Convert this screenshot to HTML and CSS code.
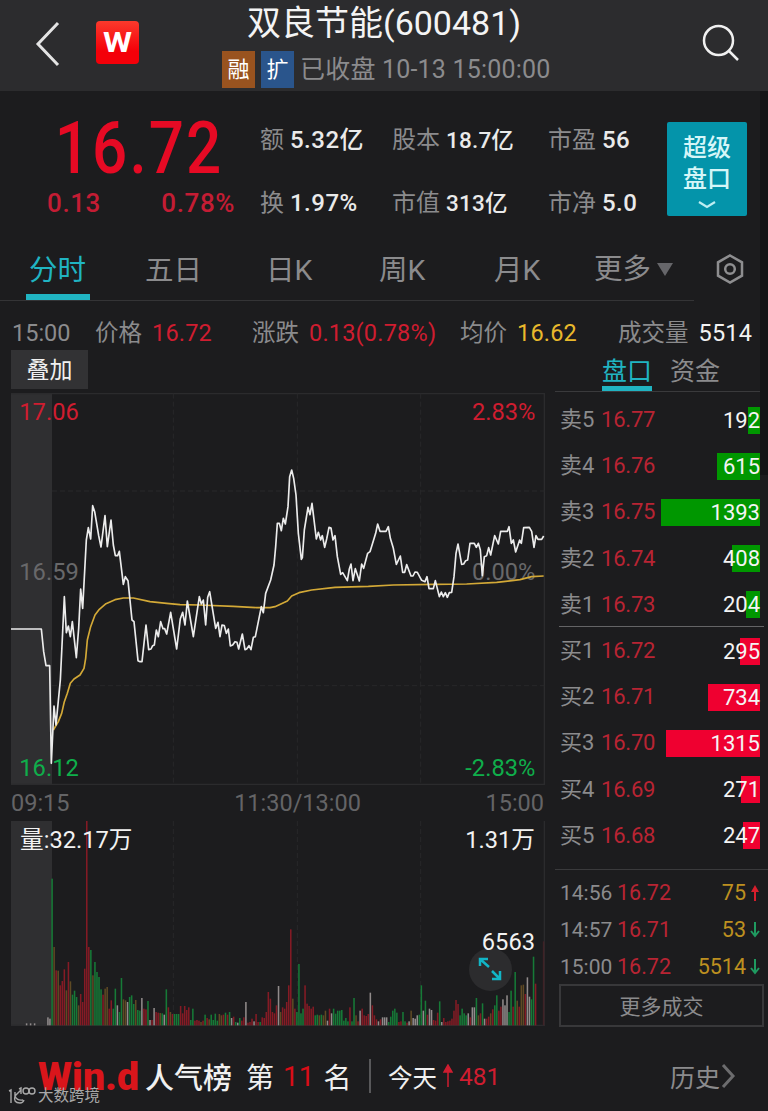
FILE: index.html
```html
<!DOCTYPE html>
<html lang="zh-CN">
<head>
    <meta charset="UTF-8">
    <meta name="viewport" content="width=device-width, initial-scale=1.0">
    <title>双良节能(600481)</title>
    <link rel="stylesheet" href="styles.css">
</head>
<body>
<header class="header">
    <svg class="back" width="26" height="46" viewBox="0 0 26 46"><path d="M23 2 L3 23 L23 44"/></svg>
    <div class="app-logo">
        <svg width="43" height="43" viewBox="0 0 43 43"><text x="21.5" y="31" text-anchor="middle" textLength="29" lengthAdjust="spacingAndGlyphs">W</text></svg>
    </div>
    <div class="title">
        <h1>双良节能(600481)</h1>
        <div class="status">
            <span class="badge badge-rong">融</span>
            <span class="badge badge-kuo">扩</span>
            <span class="closed">已收盘 10-13 15:00:00</span>
        </div>
    </div>
    <svg class="search" width="38" height="38" viewBox="0 0 38 38"><circle cx="16.500" cy="16.500" r="14.500"/><path d="M27 27 L36 36"/></svg>
</header>

<main>
    <section class="quote">
        <div class="price">
            <div class="last">16.72</div>
            <div class="change"><span>0.13</span><span>0.78%</span></div>
        </div>
        <div class="stats">
            <div>额 <b>5.32亿</b></div>
            <div>股本 <b class="small">18.7亿</b></div>
            <div>市盈 <b>56</b></div>
            <div>换 <b>1.97%</b></div>
            <div>市值 <b class="small">313亿</b></div>
            <div>市净 <b>5.0</b></div>
        </div>
        <div class="super">
            <span>超级</span>
            <span>盘口</span>
            <svg width="18" height="9" viewBox="0 0 18 9"><path d="M1 2 L9 7 L17 2"/></svg>
        </div>
    </section>

    <nav class="tabs">
        <span class="active">分时</span>
        <span>五日</span>
        <span>日K</span>
        <span>周K</span>
        <span>月K</span>
        <span class="more">更多<i></i></span>
        <svg width="28" height="30" viewBox="0 0 28 30"><path d="M14 1.500 L26 8.300 V21.700 L14 28.500 L2 21.700 V8.300 Z"/><circle cx="14" cy="15" r="4.800"/></svg>
    </nav>

    <section class="info">
        <div>15:00</div>
        <div>价格<span class="red">16.72</span></div>
        <div>涨跌<span class="red">0.13(0.78%)</span></div>
        <div>均价<span class="yellow">16.62</span></div>
        <div>成交量<span class="white">5514</span></div>
    </section>

    <section class="content">
        <div class="charts">
            <button class="overlay-btn">叠加</button>

            <svg class="chart" width="534" height="392" viewBox="33 9 1602 1176">
                <rect class="pre" x="33" y="9" width="123" height="1176"/>
                <path class="frame" d="M33 11 H1633 V1183 H33"/>
                <path class="grid" d="M156 303 H1633 M156 887 H1633 M520 11 V1183 M892 11 V1183 M1262 11 V1183"/>
                <g class="labels">
                    <text class="red" x="58" y="91">17.06</text>
                    <text class="red" x="1606" y="91" text-anchor="end">2.83%</text>
                    <text class="dim" x="58" y="571">16.59</text>
                    <text class="dim" x="1606" y="571" text-anchor="end">0.00%</text>
                    <text class="green" x="58" y="1158">16.12</text>
                    <text class="green" x="1606" y="1158" text-anchor="end">-2.83%</text>
                </g>
                <polyline class="avg" points="160,1020 175,995 185,970 193,935 202,910 211,880 222,867 240,855 252,835 257,805 262,750 272,710 285,675 298,658 318,641 345,629 370,624 400,624 450,635 500,640 540,644 600,645 700,649 770,653 810,653 825,650 862,633 875,618 897,608 935,600 1005,592 1105,589 1180,585 1300,583 1400,582 1490,577 1560,569 1595,560 1631,558"/>
                <polyline class="line" points="33,717 124,717 131,785 138,827 149,827 154,1120 162,948 168,1005 181,870 193,620 199,728 205,708 211,740 217,695 229,803 236,715 242,597 248,655 259,450 265,413 272,447 278,347 284,365 296,437 303,471 315,377 322,470 333,390 340,465 346,497 353,497 358,484 370,583 376,560 384,572 396,690 402,695 414,812 420,815 426,815 438,705 446,779 453,777 458,767 463,765 469,720 475,740 482,695 489,716 494,716 500,732 512,667 530,777 541,686 548,667 555,705 562,633 580,740 598,620 604,642 610,630 617,705 623,622 629,605 647,715 654,697 660,740 666,705 673,707 679,730 685,717 691,768 698,765 705,755 711,757 716,777 727,732 735,779 740,777 747,767 753,779 760,742 766,740 775,695 784,650 790,668 797,610 812,570 822,525 827,470 832,400 838,400 844,422 850,385 856,402 864,350 869,260 875,240 881,265 888,315 895,430 904,508 907,503 913,420 924,352 930,374 936,340 949,447 955,427 962,450 967,437 974,472 980,447 987,412 993,414 999,450 1005,437 1012,500 1022,553 1028,548 1042,572 1048,537 1053,522 1059,572 1066,536 1078,573 1085,522 1091,535 1103,490 1110,485 1127,430 1133,402 1140,424 1158,424 1165,410 1171,445 1180,475 1189,523 1201,498 1208,547 1214,547 1220,524 1233,558 1239,558 1245,546 1252,547 1265,571 1275,575 1281,560 1287,596 1300,596 1306,572 1318,620 1324,606 1330,620 1336,608 1342,622 1348,608 1355,607 1362,560 1368,490 1374,462 1385,523 1391,522 1397,512 1403,510 1410,460 1423,460 1429,472 1435,460 1441,480 1447,557 1453,500 1460,497 1466,473 1472,495 1484,437 1495,462 1502,424 1522,424 1527,410 1534,460 1540,450 1547,486 1559,450 1564,460 1571,413 1588,412 1595,424 1602,472 1608,437 1614,448 1625,448 1631,438"/>
            </svg>

            <div class="axis"><span>09:15</span><span class="noon">11:30/13:00</span><span>15:00</span></div>

            <div class="volume">
                <div class="expand">
                    <svg width="24" height="24" viewBox="0 0 24 24"><path d="M11 10 L2.500 2.500 M2 9 V2 H10 M14 14 L21.500 21.500 M22 14 V22 H14"/></svg>
                </div>
                <svg class="chart" width="534" height="205" viewBox="33 105 1602 615">
                    <rect class="pre" x="33" y="105" width="123" height="615"/>
                    <path class="frame" d="M33 718 H1633 V105"/>
                    <path class="grid" d="M520 105 V718 M892 105 V718 M1262 105 V718"/>
                    <g id="bars"></g>
                    <g class="labels white">
                        <text x="60" y="186">量:32.17万</text>
                        <text x="1605" y="186" text-anchor="end">1.31万</text>
                        <text x="1605" y="492" text-anchor="end">6563</text>
                    </g>
                </svg>
            </div>
        </div>

        <aside class="book">
            <div class="book-tabs"><span class="active">盘口</span><span>资金</span></div>

            <div class="orders sell">
                <div class="row"><span>卖5</span><em>16.77</em><b style="--w:12px">192</b></div>
                <div class="row"><span>卖4</span><em>16.76</em><b style="--w:43px">615</b></div>
                <div class="row"><span>卖3</span><em>16.75</em><b style="--w:99px">1393</b></div>
                <div class="row"><span>卖2</span><em>16.74</em><b style="--w:28px">408</b></div>
                <div class="row"><span>卖1</span><em>16.73</em><b style="--w:14px">204</b></div>
            </div>
            <div class="orders buy">
                <div class="row"><span>买1</span><em>16.72</em><b style="--w:20px">295</b></div>
                <div class="row"><span>买2</span><em>16.71</em><b style="--w:52px">734</b></div>
                <div class="row"><span>买3</span><em>16.70</em><b style="--w:94px">1315</b></div>
                <div class="row"><span>买4</span><em>16.69</em><b style="--w:19px">271</b></div>
                <div class="row"><span>买5</span><em>16.68</em><b style="--w:17px">247</b></div>
            </div>

            <div class="trades">
                <div class="trade"><span>14:56</span><em>16.72</em><b>75</b><svg class="up" width="10" height="18" viewBox="0 0 10 18"><path d="M5 17 V6"/><path class="head" d="M5 1 L9 8 H1 Z"/></svg></div>
                <div class="trade"><span>14:57</span><em>16.71</em><b>53</b><svg class="down" width="10" height="18" viewBox="0 0 10 18"><path d="M5 1 V15 M1 10 L5 15 L9 10"/></svg></div>
                <div class="trade"><span>15:00</span><em>16.72</em><b>5514</b><svg class="down" width="10" height="18" viewBox="0 0 10 18"><path d="M5 1 V15 M1 10 L5 15 L9 10"/></svg></div>
            </div>
            <button class="more-trades">更多成交</button>
        </aside>
    </section>
</main>

<footer class="footer">
    <svg class="wind" width="102" height="44" viewBox="0 0 102 44"><text x="0" y="36" textLength="101" lengthAdjust="spacingAndGlyphs">Win.d</text></svg>
    <span class="rank-name">人气榜</span>
    <span class="rank">第<b>11</b>名</span>
    <span class="today">今天<svg width="10" height="24" viewBox="0 0 10 24"><path d="M5 23 V5"/><path class="head" d="M5 1 L9 8 H1 Z"/></svg><b>481</b></span>
    <span class="history">历史<svg width="15" height="26" viewBox="0 0 15 26"><path d="M2 2 L12 13 L2 24"/></svg></span>
    <div class="watermark">
        <svg width="28" height="20" viewBox="0 0 28 20"><path d="M1 5 L3 4 V17 M13 4 L7 10 Q9 15 15 14 M7 6 V10 Q5 17 12 17 Q15 17 16 14 M11 3 L13 2 V8"/><circle cx="18" cy="5" r="3"/><circle cx="24" cy="5" r="3"/></svg>
        大数跨境
    </div>
</footer>

<script src="script.js"></script>
</body>
</html>
```

FILE: styles.css
```css
* {
    margin: 0;
    padding: 0;
    box-sizing: border-box;
}

body {
    width: 768px;
    height: 1111px;
    overflow: hidden;
    font-family: Roboto, "Noto Sans CJK SC", sans-serif;
    background-color: #1c1c1e;
    color: #8b8b8d;
}

svg {
    display: block;
    fill: none;
}

b, em {
    font-weight: normal;
    font-style: normal;
}

button {
    font-family: inherit;
    border: none;
}

.red { color: #cf1d30; fill: #cf1d30; }
.green { color: #0fae4b; fill: #0fae4b; }
.yellow { color: #e9b92c; }
.white { color: #f2f2f2; fill: #f2f2f2; }
.dim { fill: #68686a; }

/* header */
.header {
    height: 91px;
    background-color: #2c2c2e;
    display: flex;
    align-items: flex-start;
}

.back {
    margin: 21px 0 0 35px;
    stroke: #e4e4e4;
    stroke-width: 3;
}

.app-logo {
    margin: 21px 0 0 35px;
    width: 43px;
    height: 43px;
    border-radius: 4px;
    background: linear-gradient(#fb3a2c, #f40009 70%);
}

.app-logo text {
    font-size: 28px;
    font-weight: 700;
    fill: #fff;
}

.title {
    width: 330px;
    margin-left: 83px;
}

h1 {
    height: 49px;
    padding-left: 25px;
    font-size: 34px;
    font-weight: 400;
    line-height: 46px;
    color: #f4f4f4;
    white-space: nowrap;
}

.status {
    display: flex;
    align-items: center;
    gap: 6px;
    margin-top: 2px;
    height: 37px;
    font-size: 25px;
    white-space: nowrap;
}

.badge {
    width: 33px;
    height: 37px;
    line-height: 38px;
    font-size: 22px;
    text-align: center;
    color: #fff;
}

.badge-rong { background-color: #99531f; }
.badge-kuo { background-color: #2a558c; }

.closed {
    line-height: 41px;
    letter-spacing: 0.2px;
}

.search {
    margin: 24px 0 0 150px;
    stroke: #f0f0f0;
    stroke-width: 2.5;
}

/* quote */
main {
    background: linear-gradient(#141416, #141416) no-repeat right top / 8px 384px;
}

.quote {
    display: flex;
    height: 147px;
    padding-top: 17px;
}

.price {
    width: 260px;
    padding-left: 47px;
    color: #e60a24;
}

.last {
    width: 200px;
    height: 76px;
    padding-left: 9px;
    font-size: 72px;
    font-weight: 500;
    line-height: 82px;
    letter-spacing: 2.5px;
    transform: scaleX(0.86);
    transform-origin: left;
}

.change {
    display: flex;
    justify-content: space-between;
    width: 188px;
    padding-top: 1px;
    font-size: 26px;
    font-weight: 500;
    line-height: 37px;
    letter-spacing: 0.6px;
    color: #c41c34;
}

.stats {
    display: grid;
    grid-template-columns: 132px 156px 119px;
    grid-template-rows: 63px 63px;
    width: 407px;
    font-size: 24px;
    line-height: 65px;
    white-space: nowrap;
}

.stats b {
    font-weight: 500;
    letter-spacing: 0.5px;
    color: #eaeaea;
}

.stats .small {
    font-size: 22.5px;
    letter-spacing: 0.2px;
}

.super {
    display: flex;
    flex-direction: column;
    align-items: center;
    width: 80px;
    height: 94px;
    margin-top: 14px;
    padding-top: 11px;
    border-radius: 2px;
    background-color: #0494aa;
    font-size: 24px;
    font-weight: 500;
    line-height: 31px;
    color: #d5f6f8;
}

.super svg {
    margin-top: 5px;
    stroke: #bdeef2;
    stroke-width: 2.2;
}

/* period tabs */
.tabs {
    display: grid;
    grid-template-columns: 116px 121px 113px 115px 100px 121px 1fr;
    height: 63px;
    padding-left: 29px;
    font-size: 28.5px;
    line-height: 65px;
    background: linear-gradient(#343436, #343436) no-repeat left 62px / 694px 1px;
}

.tabs span {
    height: 63px;
}

.tabs .active {
    position: relative;
    color: #20b4c2;
}

.tabs .active::after {
    content: "";
    position: absolute;
    left: -3px;
    bottom: 1px;
    width: 64px;
    height: 6px;
    background-color: #20b4c2;
}

.tabs .more {
    display: flex;
    align-items: center;
    gap: 6px;
}

.more i {
    border: 8px solid transparent;
    border-top: 13px solid #66666a;
    border-bottom: none;
}

.tabs svg {
    margin: 16px 0 0 1px;
    stroke: #8e8e90;
    stroke-width: 2.5;
}

.info {
    display: grid;
    grid-template-columns: 83px 157px 208px 158px 1fr;
    height: 49px;
    padding-left: 12px;
    font-size: 23.5px;
    line-height: 64px;
    white-space: nowrap;
}

.info span {
    margin-left: 10px;
    letter-spacing: 0.2px;
}

/* charts */
.content {
    display: flex;
}

.charts {
    width: 555px;
    padding-left: 11px;
}

.overlay-btn {
    display: block;
    width: 77px;
    height: 39px;
    margin-bottom: 4px;
    padding-top: 2px;
    background-color: #323234;
    color: #f0f0f0;
    font-size: 23px;
    line-height: 38px;
}

.pre { fill: #2f2f31; }

.frame {
    stroke: #2b2b2d;
    stroke-width: 4;
}

.grid {
    stroke: #28282a;
    stroke-width: 3;
    stroke-dasharray: 15 9;
}

.labels {
    font-size: 71px;
}

.line, .avg {
    stroke-width: 5;
    stroke-linejoin: round;
}

.line { stroke: #ececec; }
.avg { stroke: #d3a937; }

.axis {
    display: flex;
    justify-content: space-between;
    width: 533px;
    height: 36px;
    font-size: 23.5px;
    line-height: 36px;
    color: #646466;
}

.noon {
    margin-left: 40px;
}

.volume {
    position: relative;
    width: 534px;
}

.volume > .chart {
    position: relative;
}

.expand {
    position: absolute;
    left: 458px;
    top: 127px;
    width: 43px;
    height: 43px;
    padding: 9px;
    border-radius: 50%;
    background-color: #2c2c2e;
}

.expand path {
    stroke: #12b5c6;
    stroke-width: 2.5;
}

/* bar kinds: r rise, g fall, o mixed, w flat, last is the closing auction */
.r { fill: #851b25; }
.g { fill: #167a37; }
.o { fill: #5f4a24; }
.w { fill: #918b8b; }
.last-bar { fill: #3f2226; }

/* order book */
.book {
    width: 213px;
    white-space: nowrap;
}

.book-tabs {
    display: flex;
    gap: 18px;
    height: 42px;
    padding-left: 47px;
    margin-right: 8px;
    border-bottom: 1px solid #3a3a3c;
    font-size: 25px;
    line-height: 43px;
}

.book-tabs .active {
    height: 41px;
    border-bottom: 5px solid #20b4c2;
    color: #20b4c2;
}

.sell {
    margin: 0 4px;
    padding-top: 5px;
    border-bottom: 1px solid #646466;
    height: 235px;
}

.buy {
    margin: 0 4px;
    padding-top: 1px;
    height: 242px;
}

.row {
    display: flex;
    align-items: center;
    height: 46.2px;
    font-size: 22px;
    line-height: 28px;
    padding-right: 4px;
}

.row span {
    width: 42px;
    padding-left: 1px;
}

.row em {
    letter-spacing: -0.2px;
}

.row em, .trade em {
    color: #b82433;
}

.row b {
    flex: 1;
    height: 27px;
    text-align: right;
    color: #f4f4f4;
    background: linear-gradient(var(--bar), var(--bar)) no-repeat right / var(--w) 100%;
}

.sell b { --bar: #009700; }
.buy b { --bar: #ef0030; }

.trades {
    border-top: 1px solid #3a3a3c;
    padding: 4px 8px 0 5px;
    height: 115px;
}

.trade {
    display: flex;
    align-items: center;
    height: 37px;
    font-size: 21.5px;
}

.trade span {
    width: 57px;
    font-size: 21px;
}

.trade b {
    flex: 1;
    padding-right: 4px;
    text-align: right;
    color: #bd9020;
}

.trade path {
    stroke-width: 2;
}

.up { stroke: #d81e2c; }
.up .head { fill: #d81e2c; stroke: none; }
.down { stroke: #1f9a60; }

.more-trades {
    display: block;
    width: 205px;
    height: 43px;
    margin-left: 4px;
    padding-bottom: 2px;
    border: 2px solid #38383a;
    background: none;
    color: #8b8b8d;
    font-size: 21px;
}

/* footer */
.footer {
    position: relative;
    display: flex;
    align-items: center;
    height: 84px;
    padding: 14px 0 0 38px;
    color: #f0f0f0;
    white-space: nowrap;
}

.wind text {
    font-size: 39px;
    font-weight: 900;
    fill: #d9151b;
}

.rank-name {
    margin-left: 5px;
    font-size: 29px;
    font-weight: 500;
}

.rank {
    display: flex;
    align-items: center;
    width: 125px;
    height: 34px;
    margin-left: 14px;
    border-right: 2px solid #58585a;
    font-size: 28px;
}

.rank b {
    margin: 0 9px;
    color: #d80d17;
}

.today {
    display: flex;
    align-items: center;
    margin-left: 17px;
    font-size: 24.5px;
}

.today svg {
    margin: 0 6px;
    stroke: #cf1d30;
    stroke-width: 1.5;
}

.today .head {
    fill: #cf1d30;
}

.today b {
    color: #cf1d30;
}

.history {
    display: flex;
    align-items: center;
    margin-left: auto;
    margin-right: 32px;
    font-size: 25px;
    color: #8b8b8d;
}

.history svg {
    margin-left: 1px;
    stroke: #6c6c6e;
    stroke-width: 3;
}

.watermark {
    position: absolute;
    left: 8px;
    top: 59px;
    display: flex;
    align-items: center;
    gap: 2px;
    font-size: 15.5px;
    line-height: 20px;
    color: #a8a8a8;
}

.watermark svg {
    stroke: #a8a8a8;
    stroke-width: 1.4;
}
```

FILE: script.js
```js
// one entry per minute from the open: height + kind
const data = `440g 235o 165r 164o 120r 133r 168r 105o 190r 132o 92g 104g 85g 60o 94r 70r 170r 613r 235r 226g
150o 190g 160g 145g 108g 92r 110o 115o 50r 75r 50g 110g 60w 40g 142g 78o 75o 70w 85g 90g 64g 76o 46g 44g 82w
50r 48r 73g 16w 16r 52w 40r 38r 37o 36g 32w 108g 54r 40o 34r 34g 34g 34g 58r 36r 58r 46r 54r 16g 50g 14r 16r
14r 10o 14r 32g 22r 18o 32g 16g 35g 14g 34o 30o 32r 38g 32r 40g 22w 26r 10g 8w 22g 14r 24r 70w 8r 10r 20r 12w
34r 10r 10g 24r 22r 40r 100r 80r 40r 36r 60r 118w 40o 54r 50r 70r 120r 288r 80o 50r 40g 184g 36g 50g 120r 65r
58r 50r 56r 30g 32g 30o 32g 30o 44o 14w 50r 36w 50g 35g 44g 44g 46g 14g 22g 12g 54r 12g 82g 30o 12r 44w 50r
30r 28r 34r 98w 60r 30r 18r 12w 18r 24w 24w 24w 10g 26g 44g 50g 38g 10r 12r 40g 12g 8r 12w 44o 22w 20w 30w
32g 120g 44w 74g 32r 50w 46w 16r 14r 38r 72g 10w 22r 10r 12r 14r 20r 44r 76r 64r 30g 50g 36g 30g 36w 24r 54w
54w 82g 30o 36r 66g 20w 20r 26r 36o 48r 60g 90g 44r 56r 78w 60w 90w 40g 104g 56r 160g 74o 56r 120o 122o 94r
144w 86w 78g 206g 125r`.split(/\s+/);

const bars = document.getElementById('bars');

function addBar(x, height, kind) {
    const rect = document.createElementNS('http://www.w3.org/2000/svg', 'rect');
    rect.setAttribute('x', x - 2.5);
    rect.setAttribute('y', 718 - height);
    rect.setAttribute('width', 4.6);
    rect.setAttribute('height', height);
    rect.setAttribute('class', kind);
    bars.appendChild(rect);
}

// call auction
[[80, 6], [92, 6], [104, 6], [144, 24], [150, 20]].forEach(([x, h]) => addBar(x, h, 'w'));

data.forEach((d, i) => addBar(156.5 + i * 6.12, parseInt(d), d.slice(-1)));

addBar(1631, 252, 'last-bar');
```
